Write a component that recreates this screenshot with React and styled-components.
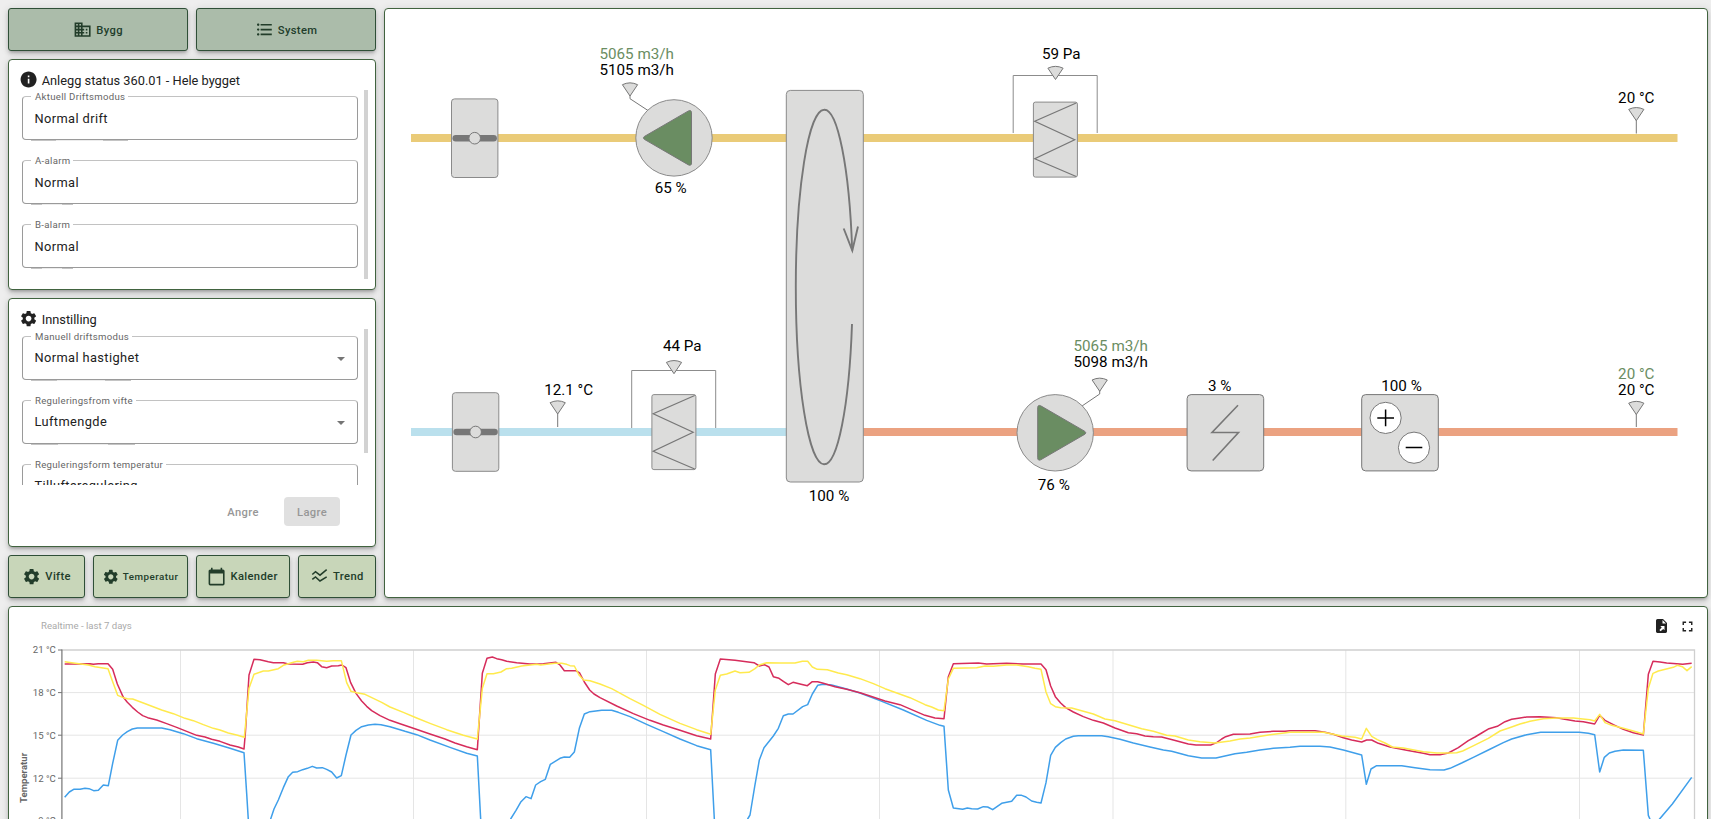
import React from "react";
import styled, { createGlobalStyle } from "styled-components";
import {
  MdBusiness,
  MdFormatListBulleted,
  MdInfo,
  MdSettings,
  MdCalendarToday,
  MdFullscreen,
} from "react-icons/md";

const GlobalStyle = createGlobalStyle`
  * { box-sizing: border-box; }
  html, body { margin: 0; background: #eeeeee; overflow: hidden; }
  body { font-family: Roboto, "Liberation Sans", sans-serif; color: #212121; }
`;

const elevation =
  "0 3px 3px -2px rgba(0,0,0,.2), 0 3px 4px rgba(0,0,0,.14), 0 1px 8px rgba(0,0,0,.12)";

const Page = styled.div`
  height: 819px;
  padding: 8px 3px 0 8px;
  overflow: hidden;
  display: flex;
  flex-direction: column;
  gap: 8px;
`;

const Upper = styled.div`
  flex: none;
  display: flex;
  gap: 8px;
  height: 590px;
`;

const Sidebar = styled.div`
  width: 368px;
  flex: none;
  display: flex;
  flex-direction: column;
  gap: 8px;
`;

const Card = styled.section`
  background: #fff;
  border: 1px solid #41633f;
  border-radius: 4px;
  box-shadow: ${elevation};
`;

const FormCard = styled(Card)`
  flex: none;
  height: ${(p) => p.$height}px;
  padding: 11px 7px 0 12px;
`;

const CardTitle = styled.h2`
  margin: 0;
  height: 19px;
  padding-bottom: 1px;
  display: flex;
  align-items: center;
  gap: 3.2px;
  font-size: 12.8px;
  font-weight: 400;
  svg {
    font-size: 19.2px;
    margin-left: -1.7px;
    flex: none;
  }
`;

const ScrollArea = styled.div`
  height: ${(p) => p.$height}px;
  overflow: hidden;
  display: flex;
  justify-content: space-between;
`;

const FieldList = styled.div`
  width: 337px;
  padding: ${(p) => p.$top}px 0 0 1px;
  display: flex;
  flex-direction: column;
  gap: 15px;
`;

const ScrollThumb = styled.div`
  width: 4px;
  height: ${(p) => p.$height}px;
  background: #d2d2d2;
`;

const Field = styled.fieldset`
  position: relative;
  flex: none;
  margin: 0;
  padding: 0 12px 0 8px;
  height: 49px;
  border: 1px solid #9a9a9a;
  border-top-color: #c2c2c2;
  border-radius: 4px;
  min-width: 0;

  &::after {
    content: "";
    position: absolute;
    left: 8px;
    bottom: -2px;
    width: ${(p) => p.$notch}px;
    height: 1px;
    background: linear-gradient(90deg, #c4c4c4 26%, #ececec 26% 74%, #c4c4c4 74%);
  }
`;

const FieldLabel = styled.legend`
  padding: 0 3px 0 4px;
  height: 10px;
  line-height: 11px;
  font-size: 9.6px;
  letter-spacing: 0.03125em;
  color: #666;
`;

const FieldValue = styled.div`
  height: 38px;
  padding: 0 0 ${(p) => (p.$select ? 6 : 4)}px 3.5px;
  display: flex;
  align-items: center;
  justify-content: space-between;
  font-size: 12.8px;
  letter-spacing: 0.03125em;
`;

const Caret = styled.span`
  border: 4px solid transparent;
  border-top-color: #757575;
  border-bottom: 0;
  margin-top: 3px;
`;

const Actions = styled.div`
  display: flex;
  justify-content: flex-end;
  gap: 13px;
  padding: 12px 28px 0 0;
`;

const ActionButton = styled.button`
  font: 500 11.2px Roboto, sans-serif;
  letter-spacing: 0.35px;
  border: 0;
  border-radius: 4px;
  width: 56px;
  height: 29px;
  padding: 1px 0 0;
  color: #979797;
  background: ${(p) => (p.$filled ? "#e0e0e0" : "transparent")};
`;

const ButtonRow = styled.div`
  flex: none;
  display: grid;
  grid-template-columns: ${(p) => p.$columns};
  gap: 8px;
  height: 43px;
`;

const NavButton = styled.button`
  display: flex;
  align-items: center;
  justify-content: center;
  gap: ${(p) => (p.$compact ? "3px" : "4px")};
  padding: 1px 0 0;
  font: 500 ${(p) => (p.$compact ? 9.8 : 11.2)}px Roboto, sans-serif;
  letter-spacing: ${(p) => (p.$compact ? 0.5 : 0.35)}px;
  color: #223d2a;
  background: ${(p) => (p.$light ? "#c8d6b9" : "#abbcaa")};
  border: 1px solid #2f4f37;
  border-radius: 3px;
  box-shadow: ${elevation};
  svg {
    font-size: ${(p) => (p.$compact ? 17.6 : 19.2)}px;
    flex: none;
  }
`;

const DiagramCard = styled(Card)`
  flex: 1;
  svg { display: block; }
`;

const ChartCard = styled(Card)`
  flex: none;
  height: 330px;
`;

const ChartHeader = styled.header`
  display: flex;
  align-items: center;
  justify-content: space-between;
  height: 38px;
  padding: 0 11px 0 32px;
`;

const ChartTitle = styled.span`
  padding-bottom: 2px;
  font-size: 9.6px;
  color: #aaa;
`;

const ChartTools = styled.div`
  display: flex;
  align-items: center;
  gap: 12px;
`;

const ChartSvg = styled.svg`
  display: block;
`;

const GREY = "#777";
const FILL = "#dcdcdb";
const GREEN = "#6a8d62";

const TrendIcon = () => (
  <svg width="19.2" height="19.2" viewBox="0 0 19.2 19.2" fill="none" stroke="currentColor" strokeWidth="1.5">
    <path d="M2.3 7.5 L5.5 4.7 L10 8.2 L16.7 2.6" />
    <path d="M2.3 12.4 L5.5 9.9 L10 14 L16.7 9.8" />
  </svg>
);

const ExportIcon = () => (
  <svg width="11" height="14" viewBox="0 0 11 14">
    <path d="M1.5 0H7l4 4v8.6a1.4 1.4 0 0 1-1.4 1.4H1.4A1.4 1.4 0 0 1 0 12.600V1.500A1.500 1.500 0 0 1 1.500 0z" fill="#212121" />
    <path d="M6.500 1v3.500H10z" fill="#fff" />
    <path d="M4.300 7H8.500V11.200L7.200 9.900L4.600 12.200L3.400 11L5.700 8.500z" fill="#fff" />
  </svg>
);

const Label = ({ x, y, green, children }) => (
  <text x={x + 0.3} y={y} fontSize="15.2" fill={green ? GREEN : "#000"}>{children}</text>
);

const Sensor = ({ x, y, tail }) => (
  <g stroke={GREY} strokeWidth="1" fill={FILL}>
    {tail && <polyline points={tail} fill="none" />}
    <path transform={`translate(${x} ${y})`} d="M-7.600 -11.300 Q0 -15 7.600 -11.300 L0 0Z" strokeLinejoin="round" />
  </g>
);

const Damper = ({ x, y }) => (
  <g transform={`translate(${x} ${y})`} stroke={GREY}>
    <rect x="-23.200" y="-39.300" width="46.400" height="78.600" rx="3" fill={FILL} stroke="#8a8a8a" />
    <line x1="-19" x2="19" y1="0" y2="0" strokeWidth="6.400" strokeLinecap="round" />
    <circle r="5.800" fill={FILL} />
  </g>
);

const Fan = ({ x, y, flip }) => (
  <g transform={`translate(${x} ${y}) scale(${flip ? -1 : 1} 1)`} stroke={GREY}>
    <circle r="38.200" fill={FILL} stroke="#8a8a8a" />
    <path
      d="M-29.700 -1.400 L14.500 -27 Q17.500 -28.300 17.500 -25 V25 Q17.500 28.300 14.500 27 L-29.700 1.400 Q-31.500 0 -29.700 -1.400Z"
      fill={GREEN}
    />
  </g>
);

const Filter = ({ x, y, top }) => (
  <g transform={`translate(${x} ${y})`} stroke={GREY} fill="none">
    <path d={`M-20 ${top + 57.500} V${top} H64 V${top + 57.500}`} stroke="#8c8c8c" />
    <rect x="0.200" y="1.600" width="44" height="75" rx="2" fill={FILL} stroke="#8a8a8a" />
    <path d="M43 2.500 L1.500 20.700 L41.500 39.200 L1.500 58.200 L43 76" strokeWidth="1.200" />
  </g>
);

const Diagram = () => (
  <svg width="1322" height="588" viewBox="385 9 1322 588">
    <rect x="411" y="134" width="1266.500" height="8" fill="#eacb78" />
    <rect x="411" y="428" width="400" height="8" fill="#bae0ed" />
    <rect x="830" y="428" width="847.500" height="8" fill="#eba281" />

    <Damper x={474.700} y={138.200} />
    <Damper x={475.600} y={432} />

    <Sensor x={630} y={96} tail="630,95 630,98.700 648,110.500" />
    <Fan x={674} y={137.900} />
    <Label x={599.200} y={59} green>5065 m3/h</Label>
    <Label x={599.200} y={75}>5105 m3/h</Label>
    <Label x={654.400} y={193}>65 %</Label>

    <g stroke={GREY} fill="none">
      <rect x="786.300" y="90.400" width="77" height="391.600" rx="4" fill={FILL} stroke="#8a8a8a" />
      <path d="M852.200 250.500 A28.400 177.400 0 0 0 824 109.700 A28.400 177.400 0 0 0 795.800 287 A28.400 177.400 0 0 0 824 464.300 A28.400 177.400 0 0 0 852 324" strokeWidth="1.900" />
      <path d="M843.700 228.500 L852.300 250.500 L858 226.500" strokeWidth="1.900" />
    </g>
    <Label x={808.500} y={501}>100 %</Label>

    <Filter x={1033.200} y={100.500} top={-25} />
    <Sensor x={1055.500} y={79.500} />
    <Label x={1041.600} y={59}>59 Pa</Label>

    <Filter x={651.700} y={393} top={-22.500} />
    <Sensor x={674} y={373.700} />
    <Label x={662.700} y={351}>44 Pa</Label>

    <Sensor x={557.700} y={414} tail="557.700,414 557.700,427" />
    <Label x={543.900} y={395}>12.1 °C</Label>

    <Sensor x={1099.700} y={391.300} tail="1099.700,390 1099.700,394 1082,406" />
    <Fan x={1055.200} y={432.800} flip />
    <Label x={1073.200} y={351} green>5065 m3/h</Label>
    <Label x={1073.200} y={367}>5098 m3/h</Label>
    <Label x={1037.500} y={490}>76 %</Label>

    <rect x="1187.100" y="394.600" width="76.600" height="76.300" rx="4" fill={FILL} stroke={GREY} />
    <path d="M1238 405.300 L1212 432.500 H1238.500 L1212.700 460.500" fill="none" stroke={GREY} strokeWidth="1.600" />
    <Label x={1207.600} y={391}>3 %</Label>

    <rect x="1361.700" y="394.600" width="76.600" height="76.300" rx="4" fill={FILL} stroke={GREY} />
    <g fill="#fff" stroke={GREY}>
      <circle cx="1385.600" cy="417.900" r="15.600" />
      <circle cx="1414" cy="447.700" r="15.600" />
    </g>
    <path d="M1377.300 418H1394M1385.600 409.600V426.300M1405.700 447.500H1422.300" stroke="#000" strokeWidth="1.500" />
    <Label x={1381} y={391}>100 %</Label>

    <Sensor x={1636.300} y={120.700} tail="1636.300,120 1636.300,133.500" />
    <Label x={1617.800} y={103}>20 °C</Label>
    <Sensor x={1636.300} y={414.500} tail="1636.300,414 1636.300,427" />
    <Label x={1617.800} y={379} green>20 °C</Label>
    <Label x={1617.800} y={395}>20 °C</Label>
  </svg>
);

/* Sample points in thirds of a pixel, in four blocks with their own x/y origin. */
const ORIGINS = [[0, 0], [1290, 0], [2580, 0], [3870, -30]];
const SERIES = [
  {
    color: "#3f9fea",
    blocks: [
      "194,592 208,576 221,568 240,568 255,565 267,566 281,572 295,571 310,555 325,557 338,490 353,421 368,405 382,395 397,387 412,384 485,384 510,389 550,401 590,416 640,430 690,445 732,458 740,580 745,660 752,800 795,730 812,657 822,627 835,600 850,563 865,530 878,517 893,515 908,509 922,505 937,499 950,504 967,503 980,508 995,516 1010,534 1024,527 1038,465 1053,405 1068,391 1085,380 1105,375 1125,373 1143,374 1170,380 1215,394 1250,404",
      "0,420 60,442 110,460 142,468 152,657 157,760 200,730 242,657 258,631 273,605 288,590 303,596 317,555 332,545 346,538 361,493 390,475 403,471 419,472 433,456 448,385 463,342 480,335 515,331 545,331 565,337 600,350 650,373 700,395 750,417 800,437 842,449 853,657 858,760 900,760 953,657 960,645 974,560 988,480 1002,443 1030,408 1045,385 1060,347 1075,342 1089,342 1118,320 1133,314 1147,282 1163,256 1180,253 1205,255 1250,267",
      "0,279 60,302 130,330 200,361 240,376 252,379 265,570 280,624 308,628 322,624 335,626 353,627 370,620 383,621 398,629 425,610 455,604 470,586 485,586 498,591 515,603 530,607 543,609 558,548 572,466 586,442 602,428 617,417 640,409 655,407 725,407 745,410 780,418 820,429 870,441 910,450 935,454 985,467 1025,474 1068,474 1125,461 1160,457 1200,450 1240,445",
      "0,472 30,469 90,469 120,471 160,480 215,495 229,583 243,537 260,527 335,527 375,533 420,539 462,540 480,535 515,519 550,502 595,480 640,458 665,447 710,434 752,427 868,427 895,430 914,434 929,546 943,502 958,489 975,484 1000,480 1060,481 1075,676 1081,690 1095,705 1108,688 1147,642 1205,562",
    ],
  },
  {
    color: "#d62c5b",
    blocks: [
      "194,192 230,192 270,191 280,193 295,191 324,191 338,208 352,252 370,292 382,307 397,322 413,336 428,347 443,353 470,360 500,371 530,382 560,394 590,406 615,411 635,418 660,424 690,435 715,441 732,447 736,400 747,225 762,178 780,179 805,185 820,188 850,188 865,192 908,193 922,188 940,186 952,188 965,200 980,203 995,198 1015,197 1026,195 1038,203 1052,248 1068,280 1085,303 1100,319 1115,332 1140,347 1170,361 1200,371 1240,385",
      "0,402 45,417 75,429 110,440 142,449 157,220 171,175 187,171 200,176 215,179 230,184 260,188 300,192 340,191 378,187 390,195 403,212 437,212 449,219 463,246 479,270 492,282 510,293 560,318 610,341 660,361 700,375 750,391 800,407 842,417 856,222 871,177 915,181 972,188 988,198 1003,194 1017,201 1030,230 1047,235 1060,244 1075,254 1089,247 1110,252 1132,257 1147,245 1163,245 1180,250 1215,260 1250,268",
      "0,278 30,288 75,303 120,314 160,331 195,346 225,354 252,356 265,230 280,191 330,190 355,189 380,192 440,190 490,192 543,192 558,209 572,258 586,290 602,309 617,323 640,336 670,350 700,361 730,369 765,384 805,398 830,401 855,408 880,410 905,411 940,420 985,432 1008,435 1052,435 1070,428 1085,417 1097,410 1120,403 1170,402 1200,397 1240,394 1275,394",
      "0,422 75,422 105,427 130,433 160,443 185,450 215,456 230,450 245,450 265,460 300,471 350,481 400,490 420,494 450,494 475,489 505,473 535,452 555,441 575,429 597,416 622,409 645,395 665,388 690,384 710,381 750,380 800,383 820,387 855,393 880,395 914,402 929,376 945,391 970,404 1000,418 1030,428 1060,435 1075,253 1089,214 1110,216 1130,219 1160,221 1178,223 1205,220",
    ],
  },
  {
    color: "#ffea4d",
    blocks: [
      "194,185 220,189 265,195 285,200 324,206 338,245 353,286 370,293 382,296 398,297 430,309 485,330 520,341 555,355 580,362 610,374 640,385 660,390 685,399 710,405 733,412 747,265 762,223 790,213 805,213 835,206 850,196 880,187 892,184 910,185 925,181 950,181 980,184 1000,182 1024,182 1040,248 1053,274 1070,278 1095,283 1145,307 1170,321 1210,337 1250,354",
      "0,370 50,389 100,406 142,417 157,265 171,221 190,221 213,216 230,206 245,205 275,198 320,193 332,195 375,190 395,190 410,193 420,197 433,198 447,225 461,240 480,242 510,252 545,266 600,296 640,316 690,343 750,370 800,389 842,403 856,270 871,226 890,222 915,213 930,218 957,217 975,206 988,195 1010,188 1050,189 1095,189 1117,184 1133,184 1147,201 1162,208 1192,209 1225,219 1250,224",
      "0,236 40,251 75,266 150,293 195,314 215,321 235,330 252,332 265,237 280,205 350,203 375,198 400,199 440,195 470,195 505,200 525,205 543,208 558,276 572,311 586,320 602,323 635,324 700,342 735,357 765,362 845,386 880,394 920,406 945,408 985,420 1020,425 1065,429 1110,423 1140,417 1170,414 1230,404",
      "0,427 100,427 130,433 155,438 195,442 215,447 229,415 245,439 262,449 285,459 307,471 340,474 400,485 440,489 480,489 500,488 518,483 545,470 595,445 630,423 665,411 690,402 720,394 760,386 800,384 850,384 900,389 914,393 929,373 945,398 965,406 1000,415 1030,423 1060,432 1075,295 1089,250 1105,243 1150,232 1162,226 1177,230 1191,242 1205,230",
    ],
  },
];

const toPoints = (blocks) =>
  blocks
    .flatMap((block, i) =>
      block.split(" ").map((pair) => {
        const [x, y] = pair.split(",").map(Number);
        return `${((x + ORIGINS[i][0]) / 3).toFixed(2)},${((y + ORIGINS[i][1]) / 3 + 600).toFixed(2)}`;
      })
    )
    .join(" ");

const TICKS = [
  ["21 °C", 650],
  ["18 °C", 692.600],
  ["15 °C", 735.200],
  ["12 °C", 778.200],
  ["9 °C", 821],
];
const DAYS = [180.500, 413.500, 646.500, 879.500, 1113, 1345.800, 1579.500];

const Chart = () => (
  <ChartSvg width="1698" height="290" viewBox="9 645 1698 290">
    <g stroke="#e5e5e5">
      {DAYS.map((x) => <line key={x} x1={x} x2={x} y1="650" y2="935" />)}
      {TICKS.slice(1).map(([t, y]) => <line key={t} x1="62" x2="1694" y1={y} y2={y} />)}
    </g>
    <path d="M62 650H1694.500V935" fill="none" stroke="#cfcfcf" strokeWidth="1.300" />
    <line x1="61.900" x2="61.900" y1="649.500" y2="935" stroke="#757575" strokeWidth="1.200" />
    {TICKS.map(([t, y]) => (
      <g key={t}>
        <line x1="58" x2="62" y1={y} y2={y} stroke="#757575" />
        <text x="55.800" y={y + 3.300} fontSize="9.600" fill="#666" textAnchor="end">{t}</text>
      </g>
    ))}
    <text transform="translate(27 803) rotate(-90)" fontSize="9.600" fontWeight="700" fill="#666">Temperatur</text>
    {SERIES.map((s) => (
      <polyline key={s.color} points={toPoints(s.blocks)} fill="none" stroke={s.color} strokeWidth="1.500" strokeLinejoin="round" />
    ))}
  </ChartSvg>
);

const FormField = ({ label, value, notch, select }) => (
  <Field $notch={notch}>
    <FieldLabel>{label}</FieldLabel>
    <FieldValue $select={select}>
      {value}
      {select && <Caret />}
    </FieldValue>
  </Field>
);

export default function App() {
  return (
    <Page>
      <GlobalStyle />
      <Upper>
        <Sidebar>
          <ButtonRow $columns="1fr 1fr">
            <NavButton><MdBusiness />Bygg</NavButton>
            <NavButton><MdFormatListBulleted />System</NavButton>
          </ButtonRow>
          <FormCard $height={231}>
            <CardTitle><MdInfo />Anlegg status 360.01 - Hele bygget</CardTitle>
            <ScrollArea $height={189}>
              <FieldList $top={1}>
                <FormField label="Aktuell Driftsmodus" value="Normal drift" notch={97} />
                <FormField label="A-alarm" value="Normal" notch={42} />
                <FormField label="B-alarm" value="Normal" notch={42} />
              </FieldList>
              <ScrollThumb $height={189} />
            </ScrollArea>
          </FormCard>
          <FormCard $height={248.5}>
            <CardTitle><MdSettings />Innstilling</CardTitle>
            <ScrollArea $height={156}>
              <FieldList $top={2}>
                <FormField label="Manuell driftsmodus" value="Normal hastighet" notch={100} select />
                <FormField label="Reguleringsfrom vifte" value="Luftmengde" notch={104} select />
                <FormField label="Reguleringsform temperatur" value="Tilluftsregulering" notch={134} select />
              </FieldList>
              <ScrollThumb $height={124} />
            </ScrollArea>
            <Actions>
              <ActionButton disabled>Angre</ActionButton>
              <ActionButton disabled $filled>Lagre</ActionButton>
            </Actions>
          </FormCard>
          <ButtonRow $columns="77px 94.5px 94px 1fr">
            <NavButton $light><MdSettings />Vifte</NavButton>
            <NavButton $light $compact><MdSettings />Temperatur</NavButton>
            <NavButton $light><MdCalendarToday />Kalender</NavButton>
            <NavButton $light><TrendIcon />Trend</NavButton>
          </ButtonRow>
        </Sidebar>
        <DiagramCard><Diagram /></DiagramCard>
      </Upper>
      <ChartCard>
        <ChartHeader>
          <ChartTitle>Realtime - last 7 days</ChartTitle>
          <ChartTools>
            <ExportIcon />
            <MdFullscreen size={17} />
          </ChartTools>
        </ChartHeader>
        <Chart />
      </ChartCard>
    </Page>
  );
}
